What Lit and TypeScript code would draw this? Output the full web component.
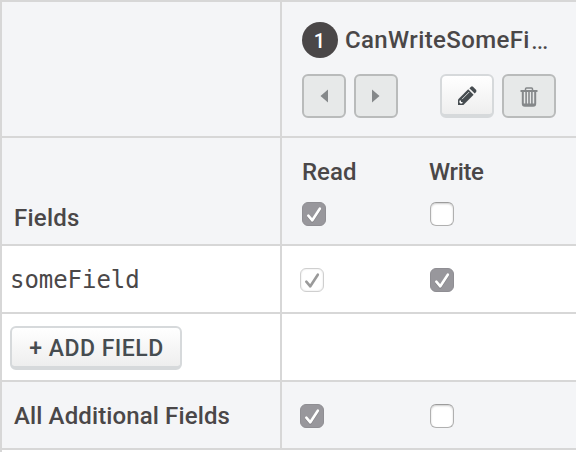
import { LitElement, html, css, svg, nothing } from "lit";
import { customElement, property } from "lit/decorators.js";

@customElement("check-box")
class CheckBox extends LitElement {
  @property({ type: Boolean }) checked = false;
  @property({ type: Boolean }) disabled = false;
  static styles = css`
    :host { display: block; width: 24px; height: 24px; }
    .box {
      box-sizing: border-box; width: 24px; height: 24px; border-radius: 6px;
      background: #fff; border: 1px solid #b0b0b0; border-top-color: #9c9c9c;
      box-shadow: inset 0 1px 2px rgba(0, 0, 0, 0.2);
    }
    .checked { background: #98979c; border-color: #8f8e93; box-shadow: none; }
    .disabled { background: #fff; border-color: #cfcfcf; box-shadow: inset 0 0 2px rgba(0, 0, 0, 0.14); }
    svg { display: block; width: 22px; height: 22px; }
    .tick { fill: none; stroke: #fff; stroke-width: 2.6; stroke-linecap: round; stroke-linejoin: round; }
    .shade { fill: none; stroke: #77767b; stroke-opacity: 0.7; stroke-width: 2.6; stroke-linecap: round; stroke-linejoin: round; }
    .disabled .tick { stroke: #9a9a9a; }
  `;
  render() {
    const d = "M5.3 12.7 L9.3 17.3 L16.8 5.7";
    return html`<div class="box ${this.checked ? "checked" : ""} ${this.disabled ? "disabled" : ""}">
      ${this.checked
        ? html`<svg viewBox="0 0 22 22">
            ${this.disabled ? nothing : svg`<path class="shade" transform="translate(0 1)" d=${d} />`}
            <path class="tick" d=${d} />
          </svg>`
        : nothing}
    </div>`;
  }
}

@customElement("app-root")
class AppRoot extends LitElement {
  static styles = css`
    :host {
      display: block; width: 576px; height: 452px; overflow: hidden;
      font: 500 24px/28px Roboto, "Liberation Sans", sans-serif; color: #4a4748;
    }
    .table {
      display: grid; box-sizing: border-box; width: 576px; height: 452px;
      grid-template-columns: 278px 294px; grid-template-rows: 134px 106px 66px 66px 66px 2px;
      gap: 2px; padding: 2px 0 0 2px; background: #d7d7d7;
    }
    .cell { display: flex; align-items: center; background: #fff; box-sizing: border-box; min-width: 0; overflow: hidden; white-space: nowrap; }
    .table > :nth-child(2n) { width: 294px; }
    .tint { background: #f4f5f7; }
    .role { display: block; padding: 20px 20px 0; }
    .title { display: flex; align-items: center; height: 36px; }
    .number {
      width: 36px; height: 36px; border-radius: 50%; background: #4a4748; color: #fff;
      font-size: 20px; line-height: 38px; text-align: center; flex: none; text-indent: -1px;
    }
    .name { margin-left: 7px; letter-spacing: 0.38px; }
    .dots { font-weight: 400; font-size: 26px; margin-left: 1px; }
    .tools { display: flex; margin-top: 16px; }
    .btn {
      box-sizing: border-box; height: 44px; border: 2px solid #d6d9db; border-bottom-width: 4px;
      border-radius: 6px; background: linear-gradient(#fff, #eee); color: #464c50;
      display: flex; align-items: center; justify-content: center;
    }
    .btn svg { display: block; flex: none; }
    .off { border: 2px solid #b9bbbb; background: #e7e9e9; color: #85888a; }
    .arrow { width: 44px; margin-right: 8px; }
    .edit { width: 54px; margin-left: 34px; margin-right: 8px; padding-top: 2px; }
    .trash { width: 54px; padding-top: 1px; }
    .fields { padding: 54px 0 0 12px; letter-spacing: 0.25px; }
    .heads { display: grid; grid-template-columns: 127px 1fr; grid-template-rows: 28px 24px; row-gap: 16px; align-content: start; padding: 20px 0 0 20px; }
    .heads check-box:last-child { margin-left: 1px; }
    .write { letter-spacing: -0.35px; }
    .checks { padding: 2px 0 0 18px; gap: 106px; }
    .code { padding: 2px 0 0 8px; font: 400 24px/28px "DejaVu Sans Mono", monospace; letter-spacing: -0.05px; }
    .add { padding: 2px 0 0 8px; }
    .add .btn { width: 172px; font-size: 23px; letter-spacing: 0.5px; padding: 4px 0 0 1px; }
    .all { padding: 2px 0 0 12px; letter-spacing: 0.12px; }
    .end { grid-column: 1 / -1; background: #fff; }
  `;
  render() {
    return html`<div class="table">
      <div class="cell tint"></div>
      <div class="cell tint role">
        <div class="title"><span class="number">1</span><span class="name">CanWriteSomeFi</span><span class="dots">…</span></div>
        <div class="tools">
          <div class="btn off arrow"><svg width="8" height="14" viewBox="0 0 8 14"><path d="M8 .5V13.5L.5 7Z" fill="currentColor" /></svg></div>
          <div class="btn off arrow"><svg width="8" height="14" viewBox="0 0 8 14"><path d="M0 .5V13.5L7.5 7Z" fill="currentColor" /></svg></div>
          <div class="btn edit">
            <svg width="20" height="20" viewBox="0 0 20 20">
              <path d="M1 13.5L11.2 3.3L16.6 8.7L6.4 18.9H1Z" fill="currentColor" />
              <path d="M12.4 2.2L14 .7Q15 0 16 .8L19 3.8Q20 5 19.1 6L17.7 7.5Z" fill="currentColor" />
              <path d="M5 13.2L12.2 6" stroke="#d5d7d8" stroke-width="1" />
              <path d="M2.6 14.6L4 14.4V16H5.6L5.4 17.2L3.8 17.7L2.3 16.3Z" fill="#fff" />
            </svg>
          </div>
          <div class="btn off trash">
            <svg width="18" height="20" viewBox="0 0 18 20" fill="none" stroke="currentColor">
              <path d="M5.5 3.5V2Q5.5 1 6.5 1H11.5Q12.5 1 12.5 2V3.5" stroke-width="1.5" />
              <path d="M.5 4H17.5" stroke-width="2" />
              <path d="M2.8 5V16.8Q2.8 18.8 4.8 18.8H13.2Q15.2 18.8 15.2 16.8V5" stroke-width="2" />
              <path d="M3 17.7H15" stroke-width="2.4" />
              <path d="M6.1 5V17M9 5V17M11.9 5V17" stroke-width="1.6" />
            </svg>
          </div>
        </div>
      </div>
      <div class="cell tint fields">Fields</div>
      <div class="cell tint heads"><span>Read</span><span class="write">Write</span><check-box checked></check-box><check-box></check-box></div>
      <div class="cell code">someField</div>
      <div class="cell checks"><check-box checked disabled></check-box><check-box checked></check-box></div>
      <div class="cell add"><div class="btn">+ ADD FIELD</div></div>
      <div class="cell"></div>
      <div class="cell tint all">All Additional Fields</div>
      <div class="cell tint checks"><check-box checked></check-box><check-box></check-box></div>
      <div class="end"></div>
    </div>`;
  }
}
